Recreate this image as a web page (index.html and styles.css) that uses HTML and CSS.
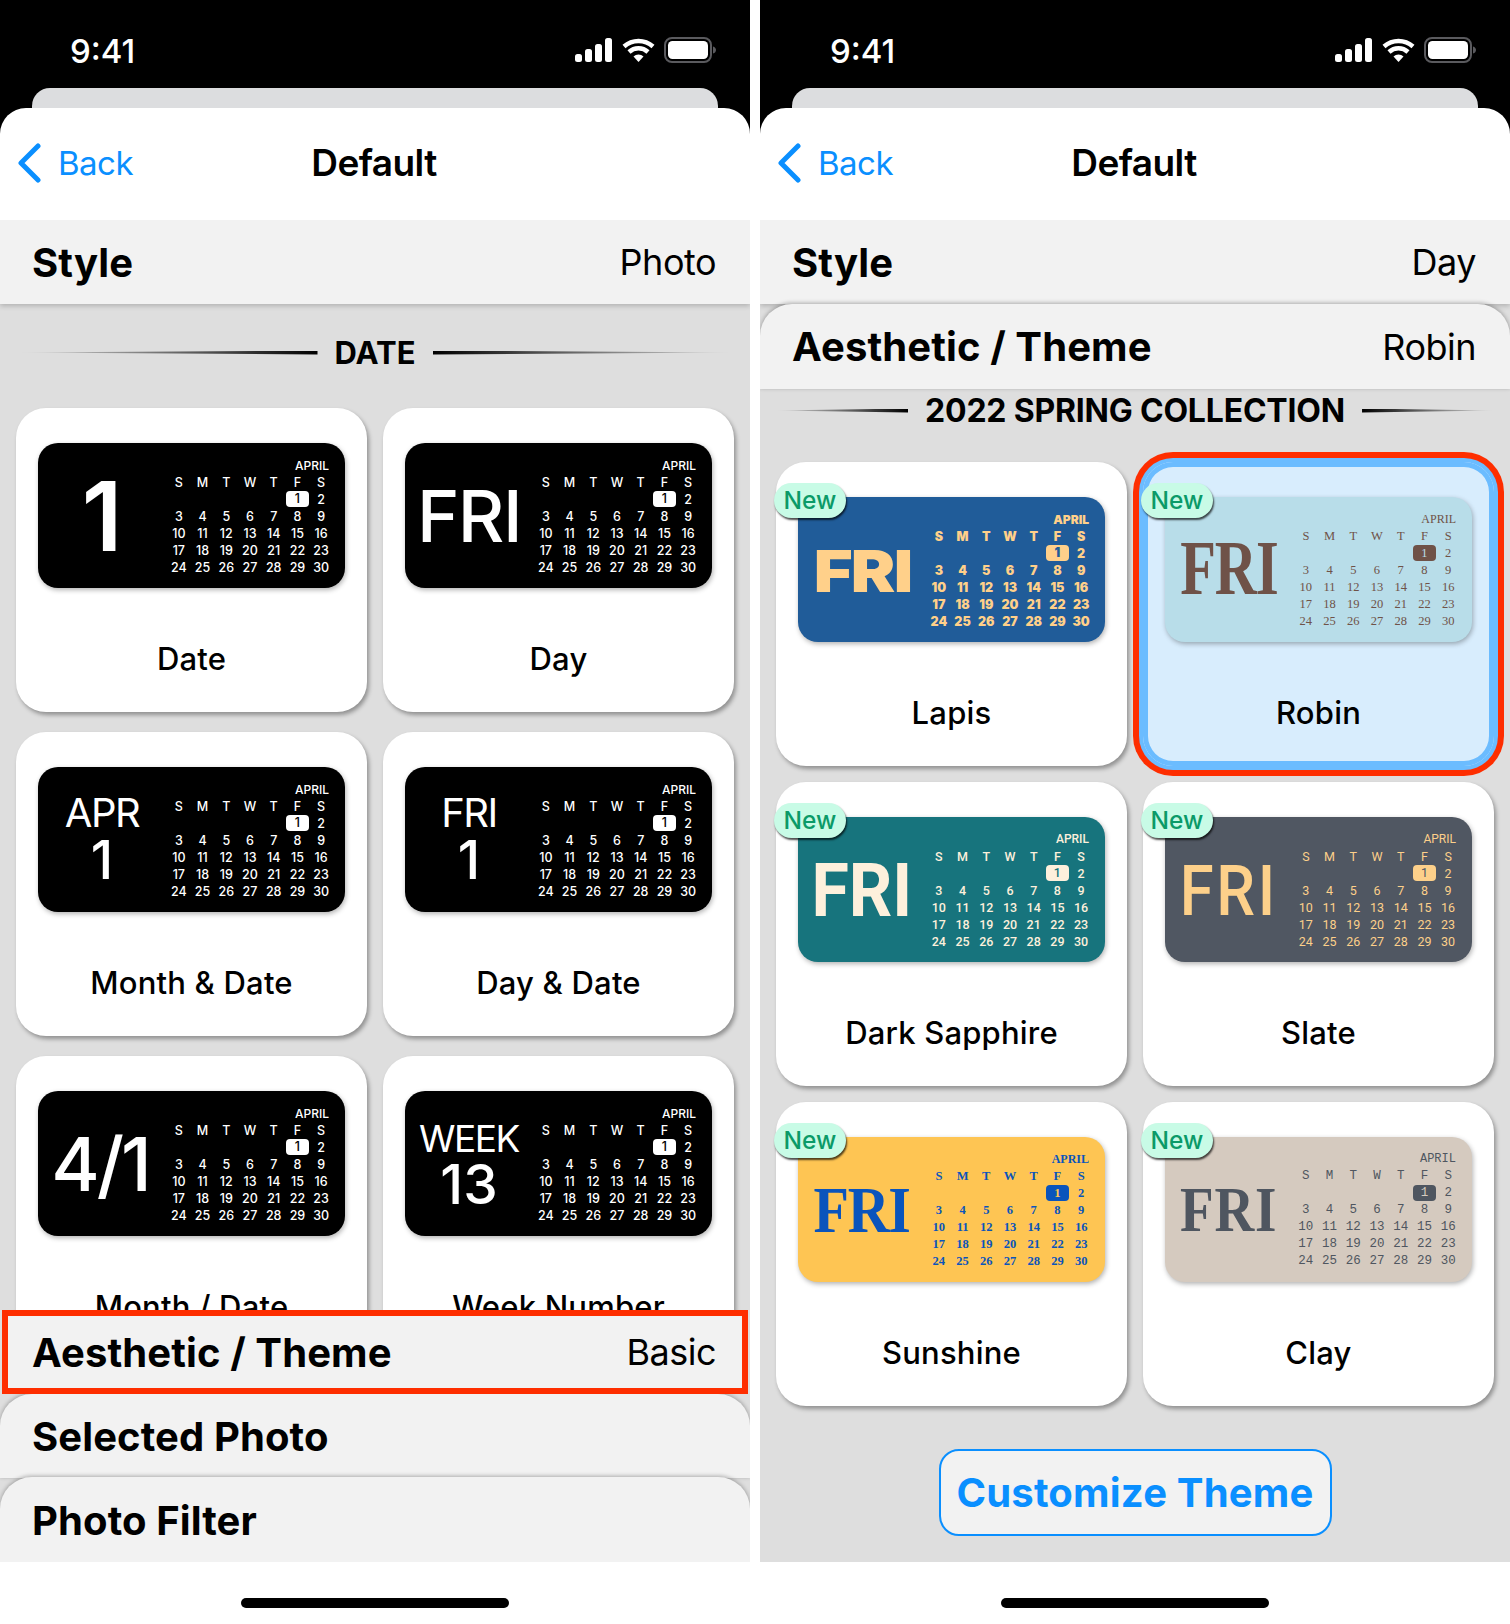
FILE: index.html
```html
<!DOCTYPE html>
<html lang="en">
<head>
    <meta charset="UTF-8">
    <meta name="viewport" content="width=device-width, initial-scale=1.0">
    <title>Default</title>
    <link rel="stylesheet" href="styles.css">
</head>
<body>
    <div class="phone">
        <div class="top">
            <div class="status">
                <span class="time">9:41</span>
                <svg class="status-icons" width="141" height="26" viewBox="0 0 141 26">
                    <rect x="0" y="17" width="7" height="8" rx="2.5" fill="#fff"/>
                    <rect x="10" y="12" width="7" height="13" rx="2.5" fill="#fff"/>
                    <rect x="20" y="7" width="7" height="18" rx="2.5" fill="#fff"/>
                    <rect x="30" y="1" width="7" height="24" rx="2.5" fill="#fff"/>
                    <path d="M49 9.5a22 22 0 0 1 29 0M54 15a14 14 0 0 1 19 0" fill="none" stroke="#fff" stroke-width="4.5"/>
                    <path d="M58.5 19.5a7.500 7.500 0 0 1 10 0L63.500 25z" fill="#fff"/>
                    <rect x="90" y="1" width="46" height="24" rx="7" fill="none" stroke="#5a5a5e" stroke-width="2"/>
                    <rect x="93" y="4" width="40" height="18" rx="4.500" fill="#fff"/>
                    <path d="M138 9.500c2 .5 3 2 3 3.500s-1 3-3 3.500z" fill="#5a5a5e"/>
                </svg>
            </div>
            <div class="peek"></div>
            <div class="nav">
                <div class="back">
                    <svg width="26" height="40" viewBox="0 0 26 40"><path d="M22 3 5 20l17 17" fill="none" stroke="#0a8fff" stroke-width="5" stroke-linecap="round" stroke-linejoin="round"/></svg>
                    <span>Back</span>
                </div>
                <div class="nav-title">Default</div>
            </div>
        </div>
        <div class="stack">
            <div class="row"><span class="row-name">Style</span><span class="row-value">Photo</span></div>
            <div class="scroll">
                <div class="divider divider--date">
                    <i class="line"></i><span>DATE</span><i class="line line--flip"></i>
                </div>
                <div class="grid grid--basic">
                    <div class="card">
                        <div class="widget theme-basic"><div class="big"><span class="big-one">1</span></div><div class="cal"></div></div>
                        <div class="card-name">Date</div>
                    </div>
                    <div class="card">
                        <div class="widget theme-basic"><div class="big"><span class="big-fri">FRI</span></div><div class="cal"></div></div>
                        <div class="card-name">Day</div>
                    </div>
                    <div class="card">
                        <div class="widget theme-basic"><div class="big big--two"><span class="big-top">APR</span><span class="big-low">1</span></div><div class="cal"></div></div>
                        <div class="card-name">Month &amp; Date</div>
                    </div>
                    <div class="card">
                        <div class="widget theme-basic"><div class="big big--two"><span class="big-top">FRI</span><span class="big-low">1</span></div><div class="cal"></div></div>
                        <div class="card-name">Day &amp; Date</div>
                    </div>
                    <div class="card">
                        <div class="widget theme-basic"><div class="big"><span class="big-slash">4/1</span></div><div class="cal"></div></div>
                        <div class="card-name">Month / Date</div>
                    </div>
                    <div class="card">
                        <div class="widget theme-basic"><div class="big big--two"><span class="big-week">WEEK</span><span class="big-num">13</span></div><div class="cal"></div></div>
                        <div class="card-name">Week Number</div>
                    </div>
                </div>
            </div>
            <div class="row row--marked"><span class="row-name">Aesthetic / Theme</span><span class="row-value">Basic</span></div>
            <div class="row row--sheet row--selected"><span class="row-name">Selected Photo</span></div>
            <div class="row row--sheet row--filter"><span class="row-name">Photo Filter</span></div>
        </div>
        <div class="home"><i></i></div>
    </div>

    <div class="phone">
        <div class="top">
            <div class="status">
                <span class="time">9:41</span>
                <svg class="status-icons" width="141" height="26" viewBox="0 0 141 26">
                    <rect x="0" y="17" width="7" height="8" rx="2.5" fill="#fff"/>
                    <rect x="10" y="12" width="7" height="13" rx="2.5" fill="#fff"/>
                    <rect x="20" y="7" width="7" height="18" rx="2.5" fill="#fff"/>
                    <rect x="30" y="1" width="7" height="24" rx="2.5" fill="#fff"/>
                    <path d="M49 9.5a22 22 0 0 1 29 0M54 15a14 14 0 0 1 19 0" fill="none" stroke="#fff" stroke-width="4.5"/>
                    <path d="M58.5 19.5a7.500 7.500 0 0 1 10 0L63.500 25z" fill="#fff"/>
                    <rect x="90" y="1" width="46" height="24" rx="7" fill="none" stroke="#5a5a5e" stroke-width="2"/>
                    <rect x="93" y="4" width="40" height="18" rx="4.500" fill="#fff"/>
                    <path d="M138 9.500c2 .5 3 2 3 3.500s-1 3-3 3.500z" fill="#5a5a5e"/>
                </svg>
            </div>
            <div class="peek"></div>
            <div class="nav">
                <div class="back">
                    <svg width="26" height="40" viewBox="0 0 26 40"><path d="M22 3 5 20l17 17" fill="none" stroke="#0a8fff" stroke-width="5" stroke-linecap="round" stroke-linejoin="round"/></svg>
                    <span>Back</span>
                </div>
                <div class="nav-title">Default</div>
            </div>
        </div>
        <div class="stack">
            <div class="row"><span class="row-name">Style</span><span class="row-value">Day</span></div>
            <div class="row row--sheet row--theme"><span class="row-name">Aesthetic / Theme</span><span class="row-value">Robin</span></div>
            <div class="scroll">
                <div class="divider divider--spring">
                    <i class="line"></i><span>2022 SPRING COLLECTION</span><i class="line line--flip"></i>
                </div>
                <div class="grid grid--themes">
                    <div class="card">
                        <span class="badge">New</span>
                        <div class="widget theme-lapis"><div class="big"><span class="big-fri">FRI</span></div><div class="cal"></div></div>
                        <div class="card-name">Lapis</div>
                    </div>
                    <div class="card card--picked">
                        <span class="badge">New</span>
                        <div class="widget theme-robin"><div class="big"><span class="big-fri">FRI</span></div><div class="cal"></div></div>
                        <div class="card-name">Robin</div>
                    </div>
                    <div class="card">
                        <span class="badge">New</span>
                        <div class="widget theme-sapphire"><div class="big"><span class="big-fri">FRI</span></div><div class="cal"></div></div>
                        <div class="card-name">Dark Sapphire</div>
                    </div>
                    <div class="card">
                        <span class="badge">New</span>
                        <div class="widget theme-slate"><div class="big"><span class="big-fri">FRI</span></div><div class="cal"></div></div>
                        <div class="card-name">Slate</div>
                    </div>
                    <div class="card">
                        <span class="badge">New</span>
                        <div class="widget theme-sunshine"><div class="big"><span class="big-fri">FRI</span></div><div class="cal"></div></div>
                        <div class="card-name">Sunshine</div>
                    </div>
                    <div class="card">
                        <span class="badge">New</span>
                        <div class="widget theme-clay"><div class="big"><span class="big-fri">FRI</span></div><div class="cal"></div></div>
                        <div class="card-name">Clay</div>
                    </div>
                </div>
                <button class="customize" type="button">Customize Theme</button>
            </div>
        </div>
        <div class="home"><i></i></div>
    </div>

    <script src="calendar.js"></script>
</body>
</html>
```

FILE: styles.css
```css
* {
    box-sizing: border-box;
}

body {
    margin: 0;
    background-color: #fff;
    font-family: Inter, "Liberation Sans", sans-serif;
    color: #000;
    display: flex;
    gap: 10px;
}

.phone {
    width: 750px;
    height: 1624px;
    flex: none;
    display: flex;
    flex-direction: column;
}

/* status bar and nav */
.top {
    background-color: #000;
}

.status {
    height: 88px;
    padding: 36px 34px 0 70px;
    display: flex;
    justify-content: space-between;
    align-items: flex-start;
}

.time {
    color: #fff;
    font-size: 33px;
    font-weight: 500;
    line-height: 30px;
}

.status-icons {
    margin-top: 1px;
}

.peek {
    height: 20px;
    margin: 0 32px;
    background-color: #dcdddf;
    border-radius: 18px 18px 0 0;
}

.nav {
    height: 112px;
    background-color: #fff;
    border-radius: 26px 26px 0 0;
    position: relative;
    display: flex;
    align-items: center;
    justify-content: center;
}

.nav-title {
    font-size: 37px;
    font-weight: 600;
    letter-spacing: -0.6px;
    margin: -4px 2px 0 0;
}

.back {
    position: absolute;
    left: 16px;
    top: 35px;
    display: flex;
    align-items: center;
    gap: 16px;
    color: #0a8fff;
    font-size: 33px;
    letter-spacing: -0.5px;
}

/* setting rows */
.stack {
    height: 1342px;
    background-color: #dedede;
    display: flex;
    flex-direction: column;
    overflow: hidden;
}

.row {
    height: 84px;
    flex: none;
    padding: 0 34px 0 32px;
    background-color: #f2f2f2;
    display: flex;
    align-items: center;
    justify-content: space-between;
    box-shadow: 0 2px 5px rgba(0, 0, 0, 0.2);
    position: relative;
}

.row-name {
    font-size: 40px;
    font-weight: 700;
    letter-spacing: 0.1px;
}

.row-value {
    font-size: 36px;
    letter-spacing: -0.5px;
}

.row--sheet {
    border-radius: 32px 32px 0 0;
    box-shadow: 0 -1px 4px rgba(0, 0, 0, 0.3);
}

.row--theme {
    height: 85px;
}

.row--marked {
    height: 84px;
    margin: 0 2px;
    padding: 0 26px 0 24px;
    border: 6px solid #fe2e00;
    box-shadow: none;
    z-index: 1;
}

.row--selected {
    height: 84px;
}

.row--filter {
    height: 85px;
    margin-top: -1px;
    padding-top: 2px;
}

/* scrolled area */
.scroll {
    flex: 1;
    min-height: 0;
    overflow: hidden;
}

.divider {
    display: flex;
    align-items: center;
    justify-content: center;
    gap: 17px;
    font-weight: 700;
}

.divider--date {
    padding: 32px 15px 0;
    height: 64px;
    margin-bottom: 40px;
    font-size: 31px;
}

.divider--spring {
    padding: 4px 15px 0;
    height: 38px;
    margin-bottom: 35px;
    font-size: 32px;
    letter-spacing: -0.2px;
}

.line {
    flex: 1;
    height: 4px;
    margin-top: 1px;
    background: linear-gradient(to right, rgba(0, 0, 0, 0), #000);
    clip-path: polygon(0 50%, 100% 0, 100% 100%);
}

.line--flip {
    transform: scaleX(-1);
}

.grid {
    display: grid;
    grid-template-columns: 351px 351px;
    grid-auto-rows: 304px;
    column-gap: 16px;
    padding: 0 16px;
}

.grid--basic {
    row-gap: 20px;
}

.grid--themes {
    row-gap: 16px;
}

/* cards */
.card {
    position: relative;
    padding: 35px 22px 0;
    background-color: #fff;
    border-radius: 30px;
    box-shadow: 2px 3px 4px rgba(0, 0, 0, 0.35);
}

.card--picked {
    background-color: #d8edfd;
    box-shadow: inset 0 0 0 5px #6bbcff, 0 0 0 4px #6bbcff, 0 0 0 10px #fe2e00;
}

.card-name {
    margin-top: 51px;
    text-align: center;
    font-size: 31px;
    font-weight: 550;
    line-height: 40px;
    letter-spacing: 0.2px;
}

.badge {
    position: absolute;
    left: -2px;
    top: 21px;
    width: 72px;
    height: 35px;
    z-index: 1;
    border-radius: 18px;
    background-color: #c8fbe6;
    color: #0b9a68;
    font-size: 24.500px;
    font-weight: 500;
    line-height: 35px;
    text-align: center;
    box-shadow: 1px 2px 2px rgba(0, 0, 0, 0.7);
}

/* lock screen widget */
.widget {
    height: 145px;
    padding: 14px 12px 0 0;
    border-radius: 20px;
    display: flex;
    color: var(--ink);
    background-color: var(--paper);
    box-shadow: 1px 2px 5px rgba(0, 0, 0, 0.3);
}

.big {
    width: 128px;
    height: 117px;
    flex: none;
    display: flex;
    flex-direction: column;
    align-items: center;
    justify-content: center;
    white-space: nowrap;
}

.big--two {
    padding-bottom: 4px;
}

.big span {
    display: block;
}

.big-one {
    font-size: 96px;
    line-height: 100px;
    font-weight: 600;
}

.big-fri {
    font-size: 72px;
    line-height: 80px;
    font-weight: 500;
    letter-spacing: -1.5px;
}

.big-slash {
    font-size: 74px;
    line-height: 80px;
    font-weight: 500;
    letter-spacing: -3px;
    margin-left: -4px;
}

.big-top {
    font-size: 40px;
    line-height: 44px;
    letter-spacing: -1.5px;
}

.big-low {
    font-size: 54px;
    line-height: 50px;
    font-weight: 500;
}

.big-week {
    font-size: 37px;
    line-height: 44px;
    letter-spacing: -1.5px;
}

.big-num {
    font-size: 55px;
    line-height: 46px;
    font-weight: 500;
}

.cal {
    width: 166px;
    margin-left: auto;
    font-size: 12.5px;
    line-height: 17px;
    font-family: var(--cal-font);
    font-weight: var(--cal-weight);
    display: grid;
    grid-template-columns: repeat(7, 1fr);
    grid-auto-rows: 17px;
    text-align: center;
    white-space: nowrap;
}

.cal-month {
    grid-column: 1 / -1;
    text-align: right;
    padding-right: 4px;
    font-size: 12px;
}

.cal-today {
    background-color: var(--ink);
    color: var(--paper);
    border-radius: 4px;
    height: 16px;
    line-height: 16px;
}

/* themes */
.theme-basic {
    --ink: #fff;
    --paper: #000;
    --cal-font: Inter, sans-serif;
    --cal-weight: 500;
}

.theme-lapis {
    --ink: #ffd08a;
    --paper: #205c99;
    --cal-font: Inter, sans-serif;
    --cal-weight: 900;
}

.theme-lapis .big-fri {
    font-size: 58px;
    font-weight: 900;
    margin-top: 3px;
    transform: scaleX(1.15);
}

.theme-robin {
    --ink: #6f5248;
    --paper: #b8dde9;
    --cal-font: "Liberation Serif", serif;
    --cal-weight: 400;
}

.theme-robin .big-fri {
    font-family: "Liberation Serif", serif;
    font-size: 78px;
    font-weight: 700;
    margin-top: -4px;
    transform: scaleX(0.75);
}

.theme-sapphire {
    --ink: #fdf0dc;
    --paper: #17747d;
    --cal-font: Roboto, sans-serif;
    --cal-weight: 500;
}

.theme-sapphire .big-fri {
    font-family: Roboto, sans-serif;
    font-size: 74px;
    font-weight: 700;
    letter-spacing: 0;
    margin-top: 3px;
    transform: scaleX(0.92);
}

.theme-slate {
    --ink: #fdd08a;
    --paper: #505762;
    --cal-font: Roboto, sans-serif;
    --cal-weight: 400;
}

.theme-slate .big-fri {
    font-family: Roboto, sans-serif;
    font-size: 70px;
    font-weight: 500;
    letter-spacing: 3px;
    margin-top: 3px;
    transform: scaleX(0.88);
}

.theme-sunshine {
    --ink: #0a54bc;
    --paper: #fec553;
    --cal-font: "Liberation Serif", serif;
    --cal-weight: 700;
}

.theme-sunshine .big-fri {
    font-family: "Liberation Serif", serif;
    font-size: 66px;
    font-weight: 700;
    transform: scaleX(0.88);
}

.theme-clay {
    --ink: #4f5660;
    --paper: #d5cabf;
    --cal-font: "Liberation Mono", monospace;
    --cal-weight: 400;
}

.theme-clay .big-fri {
    font-family: "Liberation Serif", serif;
    font-size: 64px;
    font-weight: 700;
    letter-spacing: 1px;
    transform: scaleX(0.86);
}

.customize {
    display: block;
    width: 393px;
    height: 87px;
    margin: 43px auto 0;
    padding: 0;
    background-color: #f2f2f2;
    border: 2px solid #0a8fff;
    border-radius: 20px;
    color: #0a8fff;
    font-family: Inter, sans-serif;
    font-size: 40px;
    font-weight: 700;
    letter-spacing: 0.2px;
}

.home {
    height: 62px;
    padding-top: 36px;
    display: flex;
    justify-content: center;
}

.home i {
    width: 268px;
    height: 10px;
    border-radius: 5px;
    background-color: #000;
}
```

FILE: calendar.js
```js
// every widget shows the same month, April starting on a Friday
const days = ['S', 'M', 'T', 'W', 'T', 'F', 'S'];

function addCell(cal, text, className) {
    const cell = document.createElement('span');
    cell.textContent = text;
    if (className) cell.className = className;
    cal.appendChild(cell);
}

document.querySelectorAll('.cal').forEach(function (cal) {
    addCell(cal, 'APRIL', 'cal-month');
    days.forEach(function (day) {
        addCell(cal, day);
    });
    for (let i = 0; i < 5; i++) addCell(cal, '');
    for (let d = 1; d <= 30; d++) addCell(cal, d, d === 1 ? 'cal-today' : '');
});
```
